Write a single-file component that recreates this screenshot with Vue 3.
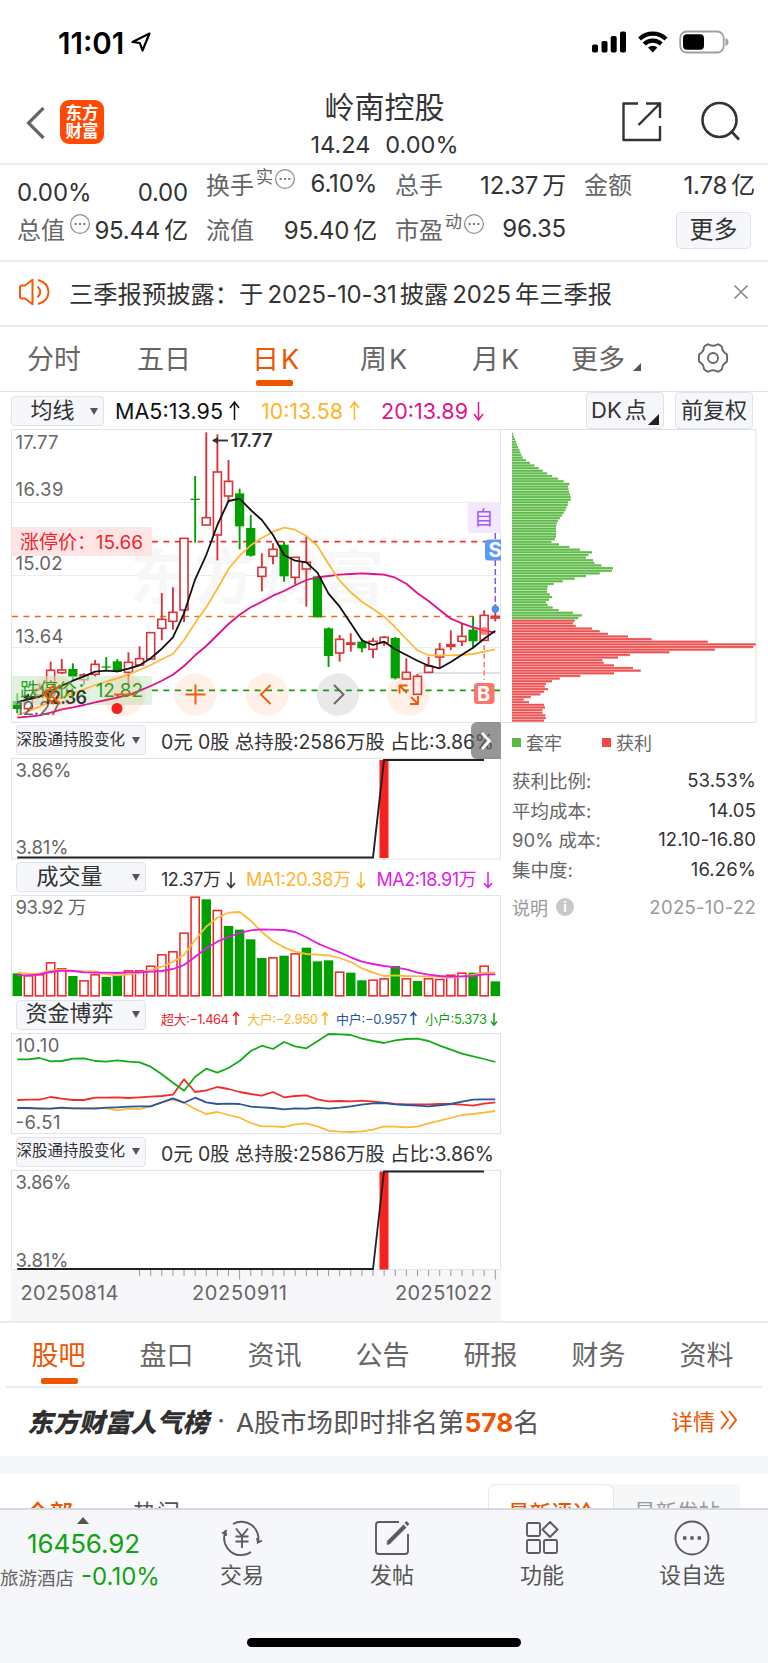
<template>
  <div class="page">
    <div class="status-bar">
      <span class="clock">11:01</span>
      <svg class="locate" width="20" height="22" viewBox="0 0 20 22">
        <path d="M18.5 2.5 L1.5 11 L8.800 12 L11.500 19.500 Z" fill="none" stroke="#000" stroke-width="2.2" stroke-linejoin="round" />
      </svg>
      <svg class="signal" width="138" height="26" viewBox="0 0 138 26">
        <rect x="1" y="14.5" width="6" height="8" rx="1.8" />
        <rect x="10.5" y="11" width="6" height="11.5" rx="1.8" />
        <rect x="19.7" y="6" width="6" height="16.5" rx="1.8" />
        <rect x="29" y="1.5" width="6" height="21" rx="1.8" />
        <g fill="none" stroke="#000" stroke-width="4.2">
          <path d="M48.5 9 A19 19 0 0 1 75 9" />
          <path d="M53.2 14 A12.3 12.3 0 0 1 70.3 14" />
        </g>
        <path d="M61.7 22.5 L57 17.6 A7 7 0 0 1 66.4 17.6 Z" />
        <rect x="89.2" y="1.5" width="43.5" height="21" rx="6.5" fill="none" stroke="#a0a0a0" stroke-width="1.8" />
        <rect x="92" y="4.3" width="21" height="15.5" rx="4" />
        <path d="M134.5 8 Q137.5 9 137.5 12 Q137.5 15 134.5 16 Z" fill="#a0a0a0" />
      </svg>
    </div>

    <header class="header">
      <svg class="back" width="20" height="34" viewBox="0 0 20 34">
        <path d="M17.5 2 L2.5 17 L17.5 32" fill="none" stroke="#666" stroke-width="3.2" />
      </svg>
      <div class="logo"><span>东方</span><span>财富</span></div>
      <div class="title">
        <div class="stock-name">岭南控股</div>
        <div class="stock-price"><span>14.24</span><span>0.00%</span></div>
      </div>
      <svg class="share" width="42" height="42" viewBox="0 0 42 42" fill="none" stroke="#333" stroke-width="2.4">
        <path d="M17 2.5 H2.5 V39 H39 V25" stroke-linejoin="round" />
        <path d="M25 2.5 H39 V17 M39 2.5 L17.5 24" />
      </svg>
      <svg class="search" width="42" height="42" viewBox="0 0 42 42" fill="none" stroke="#333" stroke-width="2.6">
        <circle cx="19.500" cy="19" r="17" />
        <path d="M31 30 L39 38.5" />
      </svg>
    </header>

    <section class="quotes">
      <div v-for="(q, i) in quotes" :key="i" class="quote" :class="{ low: i === 0, first: i > 0 && i < 4 }">
        <button v-if="q.more" class="more-btn">更多</button>
        <template v-else>
          <span :class="q.plain ? 'value' : 'label'">{{ q.label }}<sup v-if="q.sup">{{ q.sup }}</sup></span>
          <svg v-if="q.tip" class="tip" :class="{ after: q.sup }" width="22" height="22" viewBox="0 0 22 22">
            <circle cx="11" cy="11" r="9.4" fill="none" stroke="#8f8f8f" stroke-width="1.3" />
            <path d="M5.6 11 h2 M10 11 h2 M14.4 11 h2" stroke="#777" stroke-width="2" />
          </svg>
          <span class="value">{{ q.value }}<em v-if="q.unit">{{ q.unit }}</em></span>
        </template>
      </div>
    </section>

    <section class="notice">
      <svg width="34" height="28" viewBox="0 0 34 28" fill="none" stroke="#f05a0a" stroke-width="2">
        <path d="M14.500 1.8 L7 7.5 H4 Q2 7.5 2 9.5 V18.5 Q2 20.5 4 20.5 H7 L14.500 26.2 Z" stroke-linejoin="round" />
        <path d="M19.5 8.5 Q25 14 19.5 19.5 M20 2 Q30.500 5 30.500 14 Q30.500 23 20 26" />
      </svg>
      <span class="notice-text">三季报预披露：于<em>2025-10-31</em>披露<em>2025</em>年三季报</span>
      <svg class="close" width="16" height="16" viewBox="0 0 16 16">
        <path d="M1.5 1.5 L14.5 14.5 M14.5 1.5 L1.5 14.5" stroke="#8a8a8a" stroke-width="1.7" />
      </svg>
    </section>

    <nav class="periods">
      <span v-for="p in periods" :key="p" class="period" :class="{ active: p === '日K' }">
        <span>{{ p[0] }}</span><span>{{ p[1] }}</span>
      </span>
      <svg class="gear" width="32" height="32" viewBox="0 0 32 32" fill="none" stroke="#666" stroke-width="1.9">
        <path d="M11.2 2.2 Q16 5.2 20.8 2.2 Q24 3.4 25 5 Q25.2 10 29.8 12.2 Q30.6 16 29.8 19.8 Q25.2 22 25 27 Q24 28.6 20.8 29.8 Q16 26.8 11.2 29.8 Q8 28.6 7 27 Q6.8 22 2.2 19.8 Q1.4 16 2.2 12.2 Q6.8 10 7 5 Q8 3.4 11.2 2.2 Z" stroke-linejoin="round" />
        <circle cx="16" cy="16" r="5" />
      </svg>
    </nav>

    <section class="ma-bar">
      <div class="select ma-select"><span>均线</span><i class="caret" /></div>
      <svg class="ma-legend" width="400" height="37" viewBox="104 392 400 37" font-size="21.5">
        <text x="115" y="419" textLength="108" fill="#111">MA5:13.95</text>
        <path d="M234.5 420 V402 M230 408 L234.5 402 L239 408" stroke="#111" />
        <text x="261" y="419" textLength="82" fill="#fdb52c">10:13.58</text>
        <path d="M354.500 420 V402 M350 408 L354.500 402 L359 408" stroke="#fdb52c" />
        <text x="381" y="419" textLength="87" fill="#e2118c">20:13.89</text>
        <path d="M478.500 402 V420 M474 414 L478.500 420 L483 414" stroke="#e2118c" />
      </svg>
      <div class="box-btn dk">DK<em>点</em></div>
      <div class="box-btn">前复权</div>
    </section>

    <div class="charts">
      <div class="left">
        <svg class="chart" width="490" height="294" viewBox="11 429 490 294">
          <rect x="11.500" y="429.500" width="489" height="293" class="frame" />
          <path d="M12 502.500 H500 M12 575.500 H500 M12 647.500 H500" stroke="#ececf4" />
          <path d="M417 673 H500" stroke="#d5d7dc" stroke-width="1.5" />
          <text x="130" y="599" class="watermark" textLength="254">东方财富</text>

          <path d="M152 541.700 H500" class="dash" stroke="#f0343a" />
          <path d="M12 616.500 H500" class="dash" stroke="#f4681c" />
          <path d="M152 690.300 H500" class="dash" stroke="#12a012" />

          <g v-for="(c, i) in candles" :key="i">
            <path v-if="c[0] === 'g'" :d="wick(c, i)" stroke="#00a000" />
            <path v-else :d="wick(c, i)" stroke="#d8343a" />
            <rect
              v-if="c[0] === 'g'"
              :x="cx(i) - 4.6" :y="py(c[2])" width="9.200" :height="(c[3] - c[2]) / 3"
              fill="#00a000"
            />
            <rect
              v-else
              :x="cx(i) - 4" :y="py(c[2])" width="8" :height="(c[3] - c[2]) / 3"
              fill="#fff" stroke="#d8343a" stroke-width="1.600"
            />
          </g>

          <path d="M11 527 H149 Q152 527 152 530 V553 Q152 556 149 556 H11 Z" fill="#fcd5d7" fill-opacity=".62" />
          <path d="M11 676 H149 Q152 676 152 679 V702 Q152 705 149 705 H11 Z" fill="#cdeacb" fill-opacity=".6" />

          <g class="line">
            <polyline :points="points(ma20, 420)" stroke="#de1389" />
            <polyline :points="points(ma10, 420)" stroke="#fdb93a" />
            <polyline :points="points(ma5, 420)" stroke="#111" />
          </g>

          <g class="y-label">
            <text x="15.500" y="449" textLength="43">17.77</text>
            <text x="15.500" y="496" textLength="48">16.39</text>
            <text x="15.500" y="570" textLength="47">15.02</text>
            <text x="15.500" y="642.500" textLength="48">13.64</text>
            <text x="15.500" y="715" textLength="45">12.27</text>
          </g>

          <g stroke="#333" fill="#333">
            <path d="M213 440.500 H228" stroke-width="1.500" />
            <path d="M212 440.500 L218 437 V444 Z" stroke="none" />
            <text x="230.500" y="447" textLength="42" class="extreme">17.77</text>
            <path d="M24 697 H40" stroke-width="1.500" />
            <path d="M23 697 L29 693.500 V700.500 Z" stroke="none" />
            <text x="43" y="703.500" textLength="44" class="extreme">12.36</text>
          </g>

          <text x="20" y="548.500" font-size="19" textLength="123" fill="#f0242c">涨停价：15.66</text>
          <text x="20" y="697" font-size="19" textLength="123" fill="#1da01d">跌停价：12.82</text>

          <g v-for="x in [53, 124, 195.300, 267, 408.500]" :key="x">
            <circle :cx="x" cy="694.500" r="21.200" fill="#ff6a1a" fill-opacity=".1" />
          </g>
          <circle cx="338" cy="694.500" r="21.200" fill="#777" fill-opacity=".16" />
          <g fill="none" stroke="#f05a0a">
            <path d="M54 685 L44 694.500 L54 704 M60 685 L50 694.500 L60 704" />
            <path d="M114 694.500 H134" />
            <path d="M185.500 694.500 H205.500 M195.500 684.500 V704.500" />
            <path d="M270.500 685 L261 694.500 L270.500 704" />
            <path d="M334 685 L343.500 694.500 L334 704" stroke="#666" />
            <path d="M399.500 693.500 V685.500 H407.500 M399.500 685.500 L407 693 M418 696 V704 H410 M418 704 L411 697" />
          </g>
          <circle cx="117" cy="708.500" r="5.500" fill="#f3221e" />

          <path d="M495.300 533 V606" stroke="#7b54f5" stroke-width="1.500" stroke-dasharray="6 3" />
          <rect x="467.500" y="502" width="40" height="31" rx="4" fill="#f2e9fe" />
          <text x="474" y="525" font-size="19.500" fill="#a35cf2">自</text>
          <rect x="485" y="539.500" width="21" height="21" rx="3.500" fill="#5a9bfa" />
          <text x="488.500" y="557" font-size="20" font-weight="700" fill="#fff">S</text>
          <circle cx="495.300" cy="609" r="3.700" fill="#4f8df0" />
          <path d="M484.200 645 V680" stroke="#ff7a66" stroke-width="1.500" stroke-dasharray="5 3.500" />
          <circle cx="484.200" cy="631" r="4" fill="#ff5a44" fill-opacity=".75" />
          <rect x="474" y="683" width="20.500" height="21" rx="3.500" fill="#ff7468" />
          <text x="477" y="700.500" font-size="20" font-weight="700" fill="#fff">B</text>
        </svg>

        <div class="panel-head">
          <div class="select small"><span>深股通持股变化</span><i class="caret" /></div>
          <svg width="350" height="35" viewBox="151 723 350 35"><text x="161" y="749" font-size="19.500" textLength="333" fill="#333">0元 0股 总持股:2586万股 占比:3.86%</text></svg>
        </div>
        <svg class="chart" width="490" height="102" viewBox="11 758 490 102">
          <rect x="11.500" y="758.500" width="489" height="100.500" class="frame" />
          <rect x="379.500" y="760" width="9" height="98" fill="#f52222" />
          <text x="15.500" y="777" class="axis" textLength="56">3.86%</text>
          <text x="15.500" y="854" class="axis" textLength="53">3.81%</text>
          <path d="M17.300 857.500 H373 L384 760 H484" fill="none" stroke="#222" stroke-width="1.900" />
        </svg>

        <div class="panel-head">
          <div class="select"><span>成交量</span><i class="caret" /></div>
          <svg width="350" height="35" viewBox="151 860 350 35" font-size="18">
            <text x="161" y="886" textLength="60" fill="#333">12.37万</text>
            <path d="M231 872 V887 M227 883 L231 887.500 L235 883" stroke="#333" />
            <text x="246" y="886" textLength="105" fill="#fdb52c">MA1:20.38万</text>
            <path d="M361 872 V887 M357 883 L361 887.500 L365 883" stroke="#fdb52c" />
            <text x="376.500" y="886" textLength="100" fill="#e11ae6">MA2:18.91万</text>
            <path d="M488 872 V887 M484 883 L488 887.500 L492 883" stroke="#e11ae6" />
          </svg>
        </div>
        <svg class="chart" width="490" height="102" viewBox="11 895 490 102">
          <rect x="11.500" y="895.500" width="489" height="100.500" class="frame" />
          <text x="15.500" y="914" class="axis" textLength="71">93.92 万</text>
          <template v-for="(v, i) in volumes" :key="i">
            <rect v-if="v[0] === 'g'" :x="cx(i) - 4.700" :y="720 + v[1] / 3" width="9.400" :height="(828 - v[1]) / 3" fill="#00a000" />
            <rect v-else :x="cx(i) - 4.100" :y="720.500 + v[1] / 3" width="8.200" :height="(826 - v[1]) / 3" fill="#fff" stroke="#f52222" stroke-width="1.500" />
          </template>
          <g class="line">
            <polyline :points="points(vol5, 720)" stroke="#fdb93a" />
            <polyline :points="points(vol10, 720)" stroke="#e11ae6" />
          </g>
        </svg>

        <div class="panel-head tall">
          <div class="select"><span>资金博弈</span><i class="caret" /></div>
          <svg width="350" height="36" viewBox="151 997 350 36" font-size="13">
            <text x="161" y="1023.500" textLength="68" fill="#f0242c">超大:−1.464</text>
            <path d="M236 1025 V1013 M233 1016 L236 1012.500 L239 1016" stroke="#f0242c" />
            <text x="247" y="1023.500" textLength="71" fill="#fdb52c">大户:−2.950</text>
            <path d="M325 1025 V1013 M322 1016 L325 1012.500 L328 1016" stroke="#fdb52c" />
            <text x="336" y="1023.500" textLength="71" fill="#2a569f">中户:−0.957</text>
            <path d="M413.500 1025 V1013 M410.500 1016 L413.500 1012.500 L416.500 1016" stroke="#2a569f" />
            <text x="425" y="1023.500" textLength="62" fill="#12a012">小户:5.373</text>
            <path d="M494 1013 V1025 M491 1021.500 L494 1025 L497 1021.500" stroke="#12a012" />
          </svg>
        </div>
        <svg class="chart" width="490" height="101" viewBox="11 1033 490 101">
          <rect x="11.500" y="1033.500" width="489" height="100" class="frame" />
          <text x="15.500" y="1051.500" class="axis" textLength="44">10.10</text>
          <text x="15.500" y="1129" class="axis" textLength="45">-6.51</text>
          <g class="line">
            <polyline :points="points(fundBig, 1000)" stroke="#fdb93a" />
            <polyline :points="points(fundHuge, 1000)" stroke="#f52a2a" />
            <polyline :points="points(fundMid, 1000)" stroke="#2a569f" />
            <polyline :points="points(fundSmall, 1000)" stroke="#15ab15" />
          </g>
        </svg>

        <div class="panel-head tall">
          <div class="select small"><span>深股通持股变化</span><i class="caret" /></div>
          <svg width="350" height="36" viewBox="151 1134 350 36"><text x="161" y="1160.500" font-size="19.500" textLength="333" fill="#333">0元 0股 总持股:2586万股 占比:3.86%</text></svg>
        </div>
        <svg class="chart" width="490" height="151" viewBox="11 1170 490 151">
          <rect x="11" y="1270" width="490" height="52" fill="#f7f7fa" />
          <rect x="11.500" y="1170.500" width="489" height="99" class="frame" />
          <rect x="379.500" y="1171.500" width="9" height="98" fill="#f52222" />
          <text x="15.500" y="1189" class="axis" textLength="56">3.86%</text>
          <text x="15.500" y="1266.500" class="axis" textLength="53">3.81%</text>
          <path d="M17.300 1269 H373 L384 1171.500 H484" fill="none" stroke="#222" stroke-width="1.800" />
          <path v-for="i in 33" :key="i" :d="`M${cx(i + 10)} 1270 v${i === 10 || i === 33 ? 9.500 : 6}`" stroke="#999" />
          <g font-size="20" fill="#666">
            <text x="20.500" y="1300" textLength="98">20250814</text>
            <text x="192" y="1300" textLength="95">20250911</text>
            <text x="395" y="1300" textLength="97">20251022</text>
          </g>
        </svg>

        <div class="side-toggle">
          <svg width="12" height="20" viewBox="0 0 12 20"><path d="M2 2 L9.500 10 L2 18" fill="none" stroke="#fff" stroke-width="2.600" /></svg>
        </div>
      </div>

      <aside class="right">
        <svg class="chart" width="257" height="294" viewBox="500 429 257 294">
          <path d="M500 429.500 H756 V722.500 H500" fill="none" stroke="#dfe1e6" />
          <g v-for="(c, i) in chips" :key="i">
            <rect x="512" :y="chipY(i)" :width="(c - 36) / 3" height="2.630" :fill="i < 71 ? '#a9dc9c' : '#f9a9a6'" />
            <rect x="512" :y="chipY(i) + 0.400" :width="(c - 36) / 3" height="1.700" :fill="i < 71 ? '#5fba49' : '#ec5253'" />
          </g>
        </svg>
        <div class="legend">
          <span><i class="green" />套牢</span>
          <span><i class="red" />获利</span>
        </div>
        <dl class="stats">
          <div v-for="s in stats" :key="s[0]"><dt>{{ s[0] }}</dt><dd>{{ s[1] }}</dd></div>
        </dl>
        <div class="explain">
          <span>说明</span><i class="info">i</i><span class="date">2025-10-22</span>
        </div>
      </aside>
    </div>

    <nav class="tabs">
      <span v-for="(t, i) in tabs" :key="t" class="tab" :class="{ active: i === 0 }">{{ t }}</span>
    </nav>

    <section class="rank">
      <strong>东方财富人气榜</strong>
      <span class="dot">·</span>
      <span class="rank-text">A股市场即时排名第<b>578</b>名</span>
      <span class="detail">详情</span>
      <svg width="20" height="22" viewBox="0 0 20 22">
        <path d="M2 2 L9 11 L2 20 M10 2 L17 11 L10 20" fill="none" stroke="#f05a0a" stroke-width="2" />
      </svg>
    </section>
    <div class="gap" />

    <section class="comments">
      <span class="c-tab active">全部</span>
      <span class="c-tab">热门</span>
      <div class="segment"><span class="on">最新评论</span><span>最新发帖</span></div>
    </section>

    <footer class="bottom">
      <div class="index">
        <i class="up" />
        <div class="index-value">16456.92</div>
        <div class="index-row"><span>旅游酒店</span><b>-0.10%</b></div>
      </div>
      <div class="action">
        <svg width="42" height="40" viewBox="0 0 42 40" class="icon">
          <path d="M12 6 A17 17 0 0 1 37 24.500 L41 22.500 M37 24.500 L36 20" />
          <path d="M30 34 A17 17 0 0 1 4.500 13.500 L1 15.500 M4.500 12 L5 18" />
          <path d="M15 10.500 L21 18 L27 10.500 M14.500 18.500 H27.500 M14.500 23.500 H27.500 M21 18 V30" />
        </svg>
        <span>交易</span>
      </div>
      <div class="action">
        <svg width="42" height="40" viewBox="0 0 42 40" class="icon">
          <path d="M28 4 H8 Q5 4 5 7 V33 Q5 36 8 36 H34 Q37 36 37 33 V16" />
          <path d="M17 25 L34 8" stroke-width="4" />
          <path d="M16 26.500 L20 23" />
          <path d="M35 6.500 L37 4.500" stroke-width="4" />
        </svg>
        <span>发帖</span>
      </div>
      <div class="action">
        <svg width="42" height="40" viewBox="0 0 42 40" class="icon">
          <rect x="6" y="5" width="13" height="13" rx="1.500" />
          <path d="M29 4 L36.500 11.500 L29 19 L21.500 11.500 Z" stroke-linejoin="round" />
          <rect x="6" y="22" width="13" height="13" rx="1.500" />
          <rect x="23" y="22" width="13" height="13" rx="1.500" />
        </svg>
        <span>功能</span>
      </div>
      <div class="action">
        <svg width="42" height="40" viewBox="0 0 42 40" class="icon">
          <circle cx="21" cy="20" r="16.500" />
          <path d="M12 20 h3.400 M19.300 20 h3.400 M26.600 20 h3.400" stroke-width="3.400" />
        </svg>
        <span>设自选</span>
      </div>
      <div class="home-indicator" />
    </footer>
  </div>
</template>

<script setup>
const quotes = [
  { label: '0.00%', value: '0.00', plain: true },
  { label: '换手', sup: '实', tip: true, value: '6.10%' },
  { label: '总手', value: '12.37', unit: '万' },
  { label: '金额', value: '1.78', unit: '亿' },
  { label: '总值', tip: true, value: '95.44', unit: '亿' },
  { label: '流值', value: '95.40', unit: '亿' },
  { label: '市盈', sup: '动', tip: true, value: '96.35' },
  { more: true },
]

const periods = ['分时', '五日', '日K', '周K', '月K', '更多']
const tabs = ['股吧', '盘口', '资讯', '公告', '研报', '财务', '资料']

const stats = [
  ['获利比例:', '53.53%'],
  ['平均成本:', '14.05'],
  ['90% 成本:', '12.10-16.80'],
  ['集中度:', '16.26%'],
]

// [颜色, 最高, 实体上沿, 实体下沿, 最低]，单位 1/3 像素
const rows = [
  ['g', 820, 843, 867, 880], ['r', 825, 835, 866, 870], ['r', 790, 808, 825, 830], ['r', 725, 751, 825, 830],
  ['r', 717, 750, 758, 762], ['g', 730, 747, 771, 780], ['r', 760, 765, 779, 794], ['r', 720, 733, 763, 770],
  ['g', 711, 739, 743, 752], ['g', 717, 724, 756, 757], ['r', 697, 727, 757, 795], ['r', 679, 716, 735, 736],
  ['r', 638, 638, 717, 717], ['r', 519, 598, 625, 661], ['r', 502, 577, 604, 629], ['r', 355, 355, 570, 606],
  ['g', 168, 236, 240, 368], ['r', 37, 293, 315, 315], ['r', 43, 156, 345, 421], ['r', 120, 184, 228, 245],
  ['g', 206, 220, 319, 388], ['g', 285, 324, 407, 410], ['r', 400, 442, 469, 514], ['r', 370, 388, 409, 433],
  ['g', 364, 374, 469, 485], ['r', 412, 412, 472, 493], ['r', 348, 427, 447, 560], ['g', 469, 469, 592, 592],
  ['g', 622, 625, 708, 741], ['r', 645, 658, 699, 725], ['r', 640, 669, 673, 695], ['g', 655, 665, 685, 697],
  ['r', 653, 664, 688, 714], ['r', 648, 652, 668, 678], ['g', 651, 654, 775, 778], ['r', 715, 757, 777, 778],
  ['r', 762, 769, 823, 825], ['r', 711, 738, 757, 757], ['r', 669, 688, 711, 742], ['r', 631, 674, 679, 690],
  ['r', 612, 649, 664, 678], ['g', 590, 629, 664, 683], ['r', 571, 586, 661, 662], ['r', 553, 589, 594, 604],
]
const candles = rows.map(([color, high, top, bottom, low]) => [color, high, top, bottom, low])
const ma5 = [846, 838, 830, 813, 797, 782, 769, 755, 752, 754, 746, 736, 715, 686, 652, 580, 478, 405, 315, 243, 236, 270, 300, 345, 405, 422, 427, 458, 521, 560, 610, 661, 675, 665, 688, 705, 722, 737, 745, 726, 704, 683, 656, 632]
const ma10 = [885, 874, 860, 845, 832, 820, 808, 795, 785, 775, 763, 750, 735, 718, 702, 660, 608, 562, 506, 447, 407, 376, 354, 335, 323, 329, 348, 378, 432, 482, 517, 545, 567, 590, 622, 657, 691, 706, 706, 706, 705, 702, 695, 688]
const ma20 = [893, 890, 886, 878, 868, 862, 855, 847, 840, 833, 825, 812, 798, 782, 764, 738, 706, 678, 645, 612, 584, 562, 545, 527, 513, 496, 480, 472, 468, 464, 462, 460, 462, 464, 473, 491, 520, 543, 570, 596, 610, 622, 631, 638]

const volumes = [
  ['g', 760], ['r', 766], ['r', 763], ['r', 727], ['r', 745], ['g', 768], ['r', 781], ['r', 763], ['g', 771], ['g', 765], ['r', 751],
  ['r', 751], ['r', 737], ['r', 703], ['r', 694], ['r', 638], ['r', 530], ['g', 538], ['r', 570], ['g', 618], ['g', 629], ['g', 658],
  ['g', 714], ['r', 712], ['g', 707], ['r', 700], ['g', 683], ['g', 724], ['g', 721], ['r', 755], ['g', 758], ['g', 781], ['r', 779],
  ['r', 775], ['g', 738], ['r', 775], ['g', 783], ['r', 775], ['r', 777], ['r', 764], ['r', 758], ['g', 758], ['r', 737], ['g', 784],
]
const vol5 = [757, 762, 760, 752, 749, 752, 754, 754, 763, 766, 763, 758, 750, 740, 725, 704, 660, 620, 593, 578, 576, 602, 636, 664, 682, 695, 702, 704, 706, 714, 726, 745, 758, 768, 766, 768, 769, 769, 770, 773, 769, 765, 758, 758]
const vol10 = [766, 766, 763, 756, 752, 753, 757, 758, 758, 759, 757, 757, 755, 753, 747, 735, 710, 685, 665, 651, 639, 631, 628, 629, 630, 636, 652, 670, 684, 697, 712, 725, 732, 738, 742, 748, 758, 764, 768, 770, 769, 768, 763, 763]

const fundSmall = [178, 178, 174, 184, 183, 176, 175, 183, 185, 181, 185, 187, 200, 223, 248, 272, 230, 206, 218, 204, 183, 153, 137, 147, 126, 139, 145, 124, 102, 103, 105, 116, 123, 129, 121, 117, 116, 123, 137, 149, 161, 169, 177, 186]
const fundHuge = [300, 299, 299, 291, 296, 300, 300, 293, 293, 292, 294, 292, 290, 288, 284, 238, 276, 271, 261, 267, 276, 282, 287, 276, 292, 288, 286, 298, 304, 303, 304, 302, 305, 308, 312, 313, 313, 313, 312, 312, 314, 317, 311, 307]
const fundMid = [324, 324, 325, 326, 323, 325, 325, 326, 323, 322, 320, 319, 319, 307, 295, 308, 293, 307, 312, 311, 312, 320, 322, 324, 328, 325, 326, 323, 326, 323, 319, 314, 310, 309, 313, 315, 317, 319, 316, 312, 305, 299, 298, 298]
const fundBig = [324, 325, 327, 326, 324, 325, 326, 323, 325, 331, 326, 327, 319, 307, 299, 308, 327, 342, 336, 345, 353, 369, 379, 379, 381, 373, 370, 379, 392, 395, 396, 394, 389, 379, 380, 382, 380, 370, 362, 354, 345, 342, 338, 333]

// 筹码分布，前 71 根为套牢
const chips = [
  39, 42, 45, 48, 51, 54, 58, 61, 64, 68, 78, 90, 103, 116, 128, 141, 156, 174, 191, 208, 204, 205, 207, 210, 212, 212, 204, 203, 199, 196,
  191, 186, 180, 174, 170, 168, 168, 168, 168, 168, 165, 154, 177, 208, 240, 276, 265, 258, 279, 283, 304, 339, 336, 299, 258, 224, 188, 161,
  143, 141, 141, 149, 156, 147, 138, 143, 158, 176, 219, 245, 235,
  224, 219, 227, 276, 299, 324, 384, 455, 623, 767, 760, 645, 508, 390, 354, 307, 311, 342, 399, 422, 342, 241, 179, 156, 138, 134, 144,
  132, 121, 92, 71, 87, 132, 135, 127, 127, 136, 137, 132,
]

const cx = (i) => +(17.3 + i * 11.116).toFixed(2)
const py = (v) => 420 + v / 3
const points = (list, top) => list.map((v, i) => `${cx(i)},${(top + v / 3).toFixed(1)}`).join(' ')
const wick = (c, i) => `M${cx(i)} ${py(c[1])} V${py(c[4])}`
const chipY = (i) => 432.7 + i * 2.63
</script>

<style>
body {
  background: #fff;
}
</style>

<style scoped>
.page {
  width: 768px;
  height: 1663px;
  overflow: hidden;
  background: #fff;
  color: #333;
  font-family: Inter, "Noto Sans CJK SC", sans-serif;
  display: flex;
  flex-direction: column;
}

.page > * { box-sizing: border-box; flex-shrink: 0; }
svg { display: block; flex-shrink: 0; }
i, em { font-style: normal; }

.status-bar {
  height: 80px;
  padding: 5px 39px 0 58px;
  display: flex;
  align-items: center;
}
.clock { font-size: 29.5px; font-weight: 600; color: #000; letter-spacing: 0; }
.locate { margin: -2px 0 0 7px; }
.signal { margin-left: auto; }

.header {
  height: 85px;
  padding: 0 26px 0 26px;
  display: flex;
  align-items: center;
  border-bottom: 2px solid #ebebed;
}
.back { margin-top: 3px; }
.logo {
  width: 44px; height: 44px;
  margin: 1px 0 0 14px;
  border-radius: 9px;
  background: #ff4a05;
  color: #fff;
  font-size: 16.5px;
  font-weight: 700;
  line-height: 18.5px;
  display: flex; flex-direction: column; align-items: center; justify-content: center;
}
.title { flex: 1; text-align: center; padding: 4px 0 0 64px; margin-right: 20px; }
.stock-name { font-size: 30px; line-height: 42px; }
.stock-price {
  font-size: 23.5px;
  line-height: 34px;
  display: flex;
  justify-content: center;
  gap: 15px;
}
.share { margin: 1px 37px 0 0; }
.search { margin-top: 1px; }

.quotes {
  height: 97px;
  padding: 0 13px 0 17px;
  display: grid;
  grid-template-columns: repeat(4, 171px);
  grid-template-rows: 42px 45px;
  column-gap: 18px;
  border-bottom: 2px solid #ebebed;
}
.quote { display: flex; align-items: center; font-size: 24px; white-space: nowrap; }
.quote.low { padding-top: 12px; }
.quote.first { padding-bottom: 5px; }
.quote:nth-child(n+5) { padding-bottom: 2px; }
.quote .label { color: #666; position: relative; }
.quote .value:last-child { margin-left: auto; letter-spacing: -0.2px; }
.quote .value em { margin-left: 4px; }
.quote sup { font-size: 17px; line-height: 0; vertical-align: 11px; margin-left: 2px; }
.tip { margin: -10px 0 0 4px; }
.tip.after { margin-left: 1px; }
.more-btn {
  width: 75px; height: 37px;
  margin: 3px 4px 0 auto;
  padding: 0;
  border: 1.5px solid #dfe2e8;
  border-radius: 5px;
  background: #f6f7fa;
  color: #333;
  font: inherit;
  line-height: 30px;
}

.notice {
  height: 65px;
  padding: 0 19px 3px 18px;
  display: flex;
  align-items: center;
  border-bottom: 2px solid #ebebed;
}
.notice-text { margin-left: 17px; font-size: 24.3px; white-space: nowrap; }
.notice-text em { margin: 0 4px; font-size: 24px; letter-spacing: -0.1px; }
.notice-text em:first-child { margin-right: 3px; }
.close { margin-left: auto; }

.periods {
  height: 65px;
  padding: 0 0 3px 27px;
  display: flex;
  align-items: center;
  border-bottom: 1.5px solid #dcdfe5;
  font-size: 27px;
  color: #666;
  position: relative;
}
.period { width: 110px; display: flex; align-items: baseline; position: relative; }
.period:nth-child(2) { width: 115px; }
.period:nth-child(3) { width: 108px; }
.period:nth-child(4) { width: 112px; }
.period:nth-child(5) { width: 99px; }
.period:nth-child(3), .period:nth-child(4), .period:nth-child(5) { gap: 2px; }
.period.active { color: #ee5500; }
.period.active::after {
  content: '';
  position: absolute;
  left: 4px; bottom: -9px;
  width: 37px; height: 6px;
  border-radius: 2px;
  background: #ee5500;
}
.period:nth-child(6)::after {
  content: '';
  position: absolute;
  left: 62px; bottom: 6px;
  border-left: 8px solid transparent;
  border-bottom: 8px solid #555;
}
.gear { position: absolute; right: 39px; }

.ma-bar {
  height: 37px;
  padding: 0 15px 0 11px;
  display: flex;
  align-items: center;
}
.select {
  box-sizing: border-box;
  width: 130px; height: 30px;
  border: 1.5px solid #e0e3e9;
  border-radius: 4px;
  background: #f6f7fa;
  display: flex;
  align-items: center;
  font-size: 22px;
  line-height: 24px;
  position: relative;
  white-space: nowrap;
}
.select span { flex: 1; text-align: center; padding: 0 22px 3px 0; }
.select.small span { font-size: 15.5px; text-align: left; padding: 0 0 1px; }
.ma-select { width: 93px; font-size: 22px; margin-top: 1px; }
.ma-select span { padding: 0 0 2px 3px; }
.ma-select .caret { position: static; margin-right: 5px; }
.caret {
  position: absolute;
  right: 5px;
  border: 4.2px solid transparent;
  border-top: 7.5px solid #555;
  border-bottom: 0;
}
.ma-legend { margin-right: 82px; }
.ma-legend path, .panel-head path { fill: none; stroke-width: 1.5; }
.box-btn {
  box-sizing: border-box;
  width: 78px; height: 37px;
  border: 1.5px solid #dfe2e8;
  border-radius: 4px;
  background: #f6f7fa;
  font-size: 22px;
  line-height: 34px;
  text-align: center;
  white-space: nowrap;
  position: relative;
}
.dk { margin-right: 11px; text-align: left; padding-left: 4px; flex-shrink: 0; }
.dk em { margin-left: 3px; }
.dk::after {
  content: '';
  position: absolute;
  right: 4px; bottom: 3px;
  border-left: 11px solid transparent;
  border-bottom: 11px solid #222;
}

.charts { height: 894px; display: flex; border-bottom: 2px solid #ebebed; }
.left { width: 490px; margin-left: 11px; position: relative; }
.right { width: 267px; position: relative; margin-left: -1px; }
.frame { fill: none; stroke: #e1e4e9; }
.watermark { font-size: 60px; font-weight: 700; fill: #f7f7f8; }
.dash { stroke-width: 1.7; stroke-dasharray: 6 5.4; }
.line polyline { fill: none; stroke-width: 1.8; stroke-linejoin: round; }
.chart g path { stroke-width: 1.9; }
.y-label, .axis { font-size: 18.5px; fill: #666; }
.extreme { font-size: 18px; font-weight: 600; stroke: none; }

.panel-head { height: 35px; padding-left: 4.5px; display: flex; align-items: center; }
.panel-head.tall { height: 36px; }
.panel-head .select { margin: 0 5.5px 1px 0; }

.side-toggle {
  position: absolute;
  left: 460px; top: 293px;
  width: 30px; height: 37px;
  border-radius: 6px 0 0 6px;
  background: rgba(95, 95, 95, 0.66);
  display: flex; align-items: center; justify-content: center;
}

.legend { display: flex; gap: 40px; padding: 0 0 2px 12px; height: 37px; align-items: center; font-size: 18px; color: #666; }
.legend span { display: flex; align-items: center; gap: 5px; }
.legend i { width: 9px; height: 9px; margin-top: 1px; }
.green { background: #5bb944; }
.red { background: #ec4a4a; }
.stats { margin: 3px 11px 0 12px; font-size: 18.5px; }
.stats div { display: flex; justify-content: space-between; height: 29.7px; align-items: center; }
.stats dt { color: #666; }
.stats dd { margin: 0; letter-spacing: 0.1px; }
.explain { margin: 10px 11px 0 12px; display: flex; align-items: center; color: #999; font-size: 18px; }
.info {
  width: 18px; height: 18px;
  margin-left: 8px;
  border-radius: 50%;
  background: #c8c8c8;
  color: #fff;
  font-size: 13px; font-weight: 700;
  line-height: 18px;
  text-align: center;
}
.date { margin-left: auto; letter-spacing: 0.3px; font-size: 18.5px; }

.tabs {
  height: 65px;
  margin: 0 6px;
  border-bottom: 2px solid #ebebed;
  display: flex;
  font-size: 27px;
  color: #666;
}
.tab { width: 108px; text-align: center; line-height: 65px; position: relative; left: -1.5px; }
.tab.active { color: #ee5500; }
.tab.active::after {
  content: '';
  position: absolute;
  left: 36.5px; bottom: 2px;
  width: 37px; height: 6px;
  border-radius: 2px;
  background: #ee5500;
}

.rank {
  height: 68px;
  padding: 0 29px 4px 27px;
  display: flex;
  align-items: center;
  font-size: 26.3px;
  color: #555;
}
.rank strong { font-size: 26px; font-weight: 900; font-style: italic; color: #2f2f2f; letter-spacing: -0.1px; }
.dot { margin: 0 11px 0 9px; }
.rank b { color: #ee5500; font-weight: 700; }
.detail { margin-left: auto; margin-right: 4px; font-size: 22px; color: #ee5500; }

.gap { height: 18px; background: #f6f7f9; }

.comments {
  height: 34px;
  overflow: hidden;
  padding: 10px 28px 0 26px;
  display: flex;
  align-items: flex-start;
}
.c-tab { width: 107px; font-size: 23.5px; line-height: 59px; color: #555; }
.c-tab.active { color: #ee5500; font-weight: 500; }
.segment {
  box-sizing: border-box;
  width: 252px; height: 50px;
  margin-left: auto;
  border-radius: 8px;
  background: #f6f7f9;
  display: flex;
  font-size: 21.5px;
  color: #999;
}
.segment span { box-sizing: border-box; width: 126px; height: 50px; line-height: 56px; text-align: center; }
.segment .on { background: #fff; color: #ee5500; border: 1.5px solid #e5e7eb; border-radius: 8px; font-weight: 500; }

.bottom {
  height: 155px;
  border-top: 2px solid #d5d8dd;
  background: #f6f7fa;
  display: flex;
  position: relative;
}
.index { width: 167px; text-align: center; color: #12a312; position: relative; }
.up {
  display: block;
  width: 0;
  margin: 7px 0 0 77px;
  border: 6.5px solid transparent;
  border-bottom: 7px solid #555;
  border-top: 0;
}
.index-value { margin-top: 4px; font-size: 26px; line-height: 32px; letter-spacing: -0.1px; }
.index-row { display: flex; align-items: baseline; gap: 7px; line-height: 34px; white-space: nowrap; }
.index-row span { font-size: 18.5px; color: #666; }
.index-row b { font-size: 24px; font-weight: 400; }
.action {
  width: 150px;
  padding-top: 8px;
  display: flex; flex-direction: column; align-items: center;
  font-size: 22px;
  color: #555;
}
.action span { line-height: 34px; }
.icon { fill: none; stroke: #5c5c5c; stroke-width: 1.9; }
.home-indicator {
  position: absolute;
  left: 247px; bottom: 16px;
  width: 274px; height: 9px;
  border-radius: 5px;
  background: #000;
}
</style>
